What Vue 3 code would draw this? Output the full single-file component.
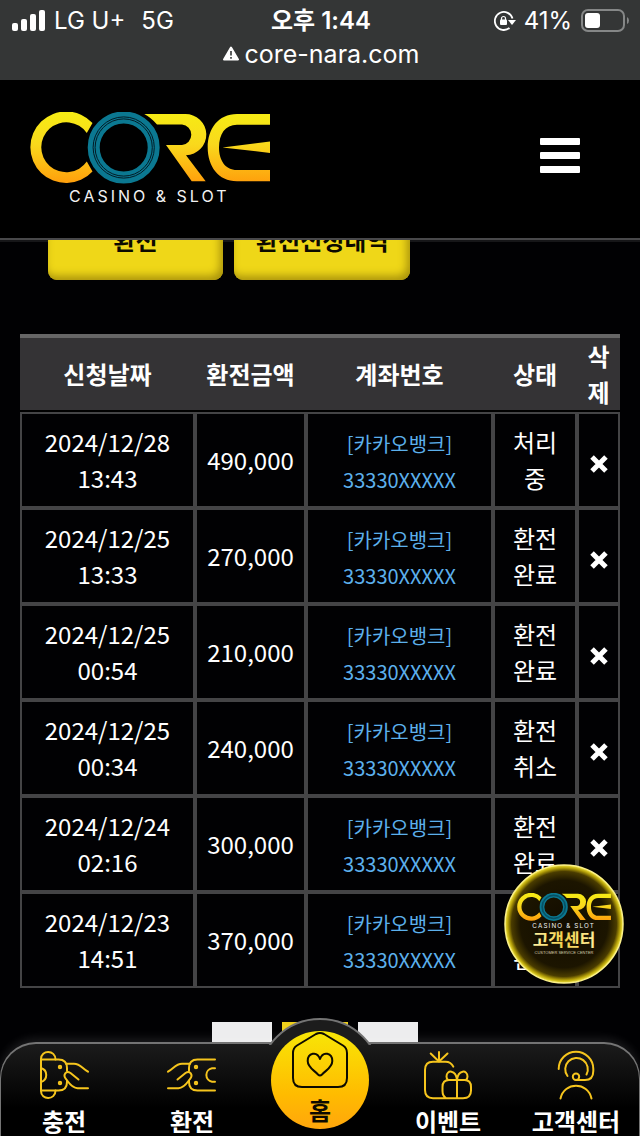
<script setup>
const rows = [
  { date: '2024/12/28', time: '13:43', amount: '490,000', status: '처리중' },
  { date: '2024/12/25', time: '13:33', amount: '270,000', status: '환전완료' },
  { date: '2024/12/25', time: '00:54', amount: '210,000', status: '환전완료' },
  { date: '2024/12/25', time: '00:34', amount: '240,000', status: '환전취소' },
  { date: '2024/12/24', time: '02:16', amount: '300,000', status: '환전완료' },
  { date: '2024/12/23', time: '14:51', amount: '370,000', status: '환전완료' },
]
</script>

<template>
  <div class="shell">
    <svg class="defs" aria-hidden="true">
      <defs>
        <linearGradient id="gold" gradientUnits="userSpaceOnUse" x1="0" y1="0" x2="0" y2="71">
          <stop offset="0" stop-color="#f6ec14" />
          <stop offset="0.45" stop-color="#f9d91c" />
          <stop offset="1" stop-color="#ff9f0c" />
        </linearGradient>
        <symbol id="core-logo" viewBox="0 0 240 92">
          <g fill="url(#gold)">
            <path d="M62.5 11A35.8 35.8 0 1 0 62.5 59.5L56.8 49.5A25 25 0 1 1 56.8 21Z" />
            <path d="M114.3 2H155A20.8 20.6 0 0 1 156 43.2L175.7 69.3H161.7L136 33H152A10.3 10.3 0 0 0 152 12.5H127Q121 5.5 114.3 2Z" />
            <path d="M240 2H207C188 2 177.7 17 177.7 35.5C177.7 54 188 69.3 207 69.3H240V58H207C195 58 189 48 189 35.5C189 22 195 12.7 207 12.7H240Z" />
            <path d="M192.5 35.4L240 29.6V41Z" />
          </g>
          <circle cx="93.7" cy="35.5" r="30" fill="none" stroke="#0b7891" stroke-width="12" />
          <circle cx="93.7" cy="35.5" r="30.6" fill="none" stroke="#021c26" stroke-width="1" />
          <circle cx="93.7" cy="35.5" r="28.6" fill="none" stroke="#021c26" stroke-width="1" />
          <text x="39" y="90" class="logo-text">CASINO &amp; SLOT</text>
        </symbol>
      </defs>
    </svg>

    <div class="status">
      <div class="status-row">
        <div class="carrier">
          <svg width="34" height="22" viewBox="0 0 34 22" fill="#fff" aria-hidden="true">
            <rect x="0" y="13" width="6" height="8" rx="2" />
            <rect x="9" y="9" width="6" height="12" rx="2" />
            <rect x="18" y="4" width="6" height="17" rx="2" />
            <rect x="27" y="0" width="6" height="21" rx="2" />
          </svg>
          <span>LG U+</span>
          <span class="network">5G</span>
        </div>
        <strong class="clock">오후 1:44</strong>
        <div class="power">
          <svg width="22" height="20" viewBox="0 0 22 20" aria-hidden="true">
            <path d="M18.5 7.5A9 9 0 1 0 15.5 17" fill="none" stroke="#fff" stroke-width="1.8" />
            <path d="M14 9H22L18 14Z" fill="#fff" />
            <rect x="6" y="8.5" width="7" height="5.5" rx="1" fill="#fff" />
            <path d="M7.5 9V7.5a2 2 0 0 1 4 0V9" fill="none" stroke="#fff" stroke-width="1.2" />
          </svg>
          <span>41%</span>
          <svg width="50" height="24" viewBox="0 0 50 24" aria-hidden="true">
            <rect x="2" y="1" width="42" height="21" rx="6" fill="none" stroke="#858787" stroke-width="2" />
            <rect x="5" y="4" width="15" height="15" rx="3" fill="#fff" />
            <path d="M47 8Q49 9 49 11.5T47 15Z" fill="#858787" />
          </svg>
        </div>
      </div>
      <div class="address">
        <svg width="16" height="16" viewBox="0 0 16 16" aria-hidden="true">
          <path d="M8 1.5L15 13.5H1Z" fill="#fff" stroke="#fff" stroke-width="2" stroke-linejoin="round" />
          <path d="M8 5V9.5M8 11V12.8" stroke="#343636" stroke-width="1.6" />
        </svg>
        <span>core-nara.com</span>
      </div>
    </div>

    <header class="header">
      <a href="#" aria-label="CORE Casino &amp; Slot">
        <svg class="logo" width="240" height="92"><use href="#core-logo" /></svg>
      </a>
      <button class="menu" type="button" aria-label="메뉴"><i></i><i></i><i></i></button>
    </header>

    <main class="content">
      <div class="tabs">
        <button type="button">환전</button>
        <button type="button">환전신청내역</button>
      </div>

      <table class="history">
        <colgroup>
          <col class="c-date" /><col class="c-amount" /><col /><col class="c-status" /><col class="c-delete" />
        </colgroup>
        <thead>
          <tr>
            <th>신청날짜</th>
            <th>환전금액</th>
            <th>계좌번호</th>
            <th>상태</th>
            <th class="narrow">삭제</th>
          </tr>
        </thead>
        <tbody>
          <tr v-for="row in rows" :key="row.date + row.time">
            <td>{{ row.date }} {{ row.time }}</td>
            <td>{{ row.amount }}</td>
            <td><span class="account">[카카오뱅크]<br />33330XXXXX</span></td>
            <td class="state">{{ row.status }}</td>
            <td class="remove">
              <button type="button" aria-label="삭제">
                <svg width="18" height="18" viewBox="0 0 18 18" aria-hidden="true">
                  <path d="M3.8 3.8L14.2 14.2M14.2 3.8L3.8 14.2" stroke="#fff" stroke-width="5" stroke-linecap="square" />
                </svg>
              </button>
            </td>
          </tr>
        </tbody>
      </table>

      <div class="pages">
        <button type="button" aria-label="이전"></button>
        <button type="button" class="current" aria-label="현재 페이지"></button>
        <button type="button" aria-label="다음"></button>
      </div>
    </main>

    <button class="support" type="button">
      <svg width="120" height="120" viewBox="0 0 120 120">
        <defs>
          <radialGradient id="disc">
            <stop offset="0" stop-color="#120c00" />
            <stop offset="0.74" stop-color="#1c1500" />
            <stop offset="0.89" stop-color="#4a3c00" />
            <stop offset="0.95" stop-color="#b39e08" />
            <stop offset="1" stop-color="#f5e83c" />
          </radialGradient>
          <linearGradient id="label" x1="0" y1="0" x2="1" y2="0">
            <stop offset="0" stop-color="#fff3a0" />
            <stop offset="0.5" stop-color="#f3cf4a" />
            <stop offset="1" stop-color="#fff0a0" />
          </linearGradient>
        </defs>
        <circle cx="60" cy="60" r="59" fill="url(#disc)" stroke="#fbf08a" stroke-width="1.5" />
        <use href="#core-logo" x="13" y="29" width="94" height="36" />
        <text x="60" y="82" class="support-title" fill="url(#label)">고객센터</text>
        <text x="60" y="90" class="support-sub">CUSTOMER SERVICE CENTER</text>
      </svg>
    </button>

    <nav class="dock">
      <span class="bump"><i></i></span>
      <a href="#">
        <svg width="48" height="48" viewBox="0 0 48 48" class="line" aria-hidden="true">
          <path d="M15.5 8.5C15.5-1.5 1-1.5 1 8V40C1 49.5 15.5 49.5 15.5 39.5" />
          <path d="M1 8.5H18.5Q27 8.5 27 17V20M1 39.5H18.5Q27 39.5 27 31V29.5M1 17A7.3 7.3 0 0 1 1 31" />
          <path d="M26 12.7H34C40 12.7 42 17 48 20.7M38.5 28.5L30.5 22C26 19 22.5 24 26 28C29 32 32 37.2 37.5 37.2H48" />
          <circle cx="20" cy="16" r="1.2" /><circle cx="20" cy="32" r="1.2" />
        </svg>
        <span>충전</span>
      </a>
      <a href="#">
        <svg width="48" height="48" viewBox="0 0 48 48" class="line" aria-hidden="true">
          <g transform="matrix(-1 0 0 1 48 0)">
            <path d="M1 8.5H18.5Q27 8.5 27 17V20M1 39.5H18.5Q27 39.5 27 31V29.5M1 17.3H4A6.8 6.8 0 0 1 4 30.7H1" />
            <path d="M26 12.7H34C40 12.7 42 17 48 20.7M38.5 28.5L30.5 22C26 19 22.5 24 26 28C29 32 32 37.2 37.5 37.2H48" />
            <circle cx="20" cy="16" r="1.2" /><circle cx="20" cy="32" r="1.2" />
          </g>
        </svg>
        <span>환전</span>
      </a>
      <a href="#" class="home">
        <svg width="56" height="56" viewBox="0 0 56 56" class="line dark" aria-hidden="true">
          <path d="M24 2L5 13.5Q1 16 1 21V46Q1 55 10 55H46Q55 55 55 46V21Q55 16 51 13.5L32 2Q28-.2 24 2Z" />
          <path d="M28 27C25 18.5 15.7 21 15.7 29C15.7 35.5 22 38 26 42.5Q28 44.5 30 42.5C34 38 40.3 35.5 40.3 29C40.3 21 31 18.5 28 27Z" />
        </svg>
        <span>홈</span>
      </a>
      <a href="#">
        <svg width="48" height="48" viewBox="0 0 48 48" class="line" aria-hidden="true">
          <path d="M29.3 15.7Q27 10.7 21.5 10.7H9Q1 10.7 1 19V39Q1 47.2 9 47.2H39Q47 47.2 47 39.5V36Q47 29 40.5 29H25Q18.5 29 18.5 36V40Q18.5 45 22 47M33 29V47" />
          <path d="M33 29C32 18.5 22.5 18.5 22.5 25.5Q22.5 27.5 24 29M33 29C34 18.5 43.5 18.5 43.5 25.5Q43.5 27.5 42 29M15 10.5V1M15 10.5L6.7 2.5M15 10.5L23.5 2.5" />
        </svg>
        <span>이벤트</span>
      </a>
      <a href="#">
        <svg width="48" height="48" viewBox="0 0 48 48" class="line" aria-hidden="true">
          <path d="M6.7 18A17.3 17.3 0 0 1 41.3 18V20Q41.3 29 33 29H24.5" />
          <path d="M15.5 25A11.3 11.3 0 1 1 34.5 23.5M8.5 47.5C12 30.5 36 30.5 39.5 47.5" />
          <circle cx="24" cy="25.8" r="3.2" />
        </svg>
        <span>고객센터</span>
      </a>
    </nav>
  </div>
</template>

<style>
body {
  margin: 0;
  background: #000;
}
</style>

<style scoped>
.shell {
  position: relative;
  display: flex;
  flex-direction: column;
  height: 100vh;
  overflow: hidden;
  background: #010103;
  color: #fff;
  font-family: "Noto Sans CJK KR", "Noto Sans", sans-serif;
  font-size: 24px;
  line-height: 36px;
}
.defs {
  position: absolute;
  width: 0;
  height: 0;
}
button {
  margin: 0;
  padding: 0;
  border: 0;
  background: none;
  color: inherit;
  font: inherit;
}
a {
  color: inherit;
  text-decoration: none;
}
svg {
  display: block;
}
.logo-text {
  fill: #f2f2f2;
  font-family: Inter, sans-serif;
  font-size: 16px;
  letter-spacing: 3px;
}

.status {
  padding: 5px 10px 9px 12px;
  background: #343636;
  font-family: Inter, "Noto Sans CJK KR", sans-serif;
}
.status-row {
  display: grid;
  grid-template-columns: 1fr auto 1fr;
  align-items: center;
  line-height: 32px;
}
.carrier,
.power,
.address {
  display: flex;
  align-items: center;
}
.carrier {
  gap: 8px;
}
.network {
  margin-left: 8px;
}
.clock {
  font-weight: 600;
}
.power {
  justify-content: flex-end;
  gap: 8px;
}
.address {
  justify-content: center;
  gap: 6px;
  font-size: 25px;
  line-height: 34px;
}

.header {
  display: flex;
  align-items: flex-start;
  justify-content: space-between;
  height: 126px;
  padding: 32px 60px 0 30px;
  border-bottom: 2px solid #48484a;
  background: #000;
  box-shadow: 0 2px 0 #161618;
}
.menu {
  display: grid;
  gap: 7px;
  width: 40px;
  margin-top: 26px;
}
.menu i {
  height: 7px;
  border-radius: 1px;
  background: #fff;
}

.content {
  position: relative;
  flex: 1;
  min-height: 0;
  padding: 0 20px;
  overflow: hidden;
}
.tabs {
  display: flex;
  gap: 11px;
  margin: -38px 28px 54px;
}
.tabs button {
  min-width: 175px;
  height: 78px;
  padding: 0 22px 2px;
  border-radius: 9px;
  background: #efd718;
  box-shadow: inset -3px -4px 8px #a8920c;
  color: #0c0a00;
  font-weight: 700;
}

.history {
  width: 100%;
  table-layout: fixed;
  border-collapse: separate;
  border-spacing: 0;
  text-align: center;
}
.c-date { width: 175px; }
.c-amount { width: 111px; }
.c-status { width: 84px; }
.c-delete { width: 43px; }
th {
  padding: 0;
  border-top: 4px solid #666;
  border-bottom: 2px solid #000;
  background: #343335;
  font-weight: 700;
}
.narrow {
  padding: 0 8px;
  word-break: break-all;
}
td {
  padding: 10px 8px;
  border: 2px solid #444446;
}
.account {
  color: #5cb0ec;
  font-size: 20px;
  line-height: 32px;
}
.state {
  padding: 10px 16px;
}
.remove {
  padding: 10px 0 4px;
}
.remove svg {
  margin: auto;
}
.remove button {
  width: 100%;
}

.pages {
  display: flex;
  justify-content: center;
  margin-top: 34px;
}
.pages button {
  width: 60px;
  height: 60px;
  margin-right: 10px;
  background: #ededee;
}
.pages .current {
  width: 66px;
  background: #efd01c;
}

.support {
  position: absolute;
  right: 16px;
  bottom: 152px;
  z-index: 2;
  border-radius: 50%;
}
.support-title {
  font-family: "Noto Sans CJK KR", sans-serif;
  font-size: 17px;
  font-weight: 700;
  text-anchor: middle;
}
.support-sub {
  fill: #d8cfae;
  font-family: "Liberation Sans", sans-serif;
  font-size: 4px;
  text-anchor: middle;
}

.dock {
  position: absolute;
  right: 0;
  bottom: 0;
  left: 0;
  z-index: 1;
  display: grid;
  grid-template-columns: repeat(5, 1fr);
  height: 94px;
  border-radius: 36px 36px 0 0;
  background: linear-gradient(#1c1c1c, #000 70%);
  box-shadow: inset 0 1px 0 1px #747474, 0 -4px 10px rgba(255, 255, 255, 0.1);
  font-weight: 700;
}
.dock a {
  position: relative;
  display: flex;
  flex-direction: column;
  align-items: center;
  padding-top: 9px;
  line-height: 44px;
  white-space: nowrap;
}
.bump {
  position: absolute;
  top: -24px;
  left: 50%;
  width: 124px;
  height: 27px;
  margin-left: -62px;
  overflow: hidden;
}
.bump i {
  display: block;
  box-sizing: border-box;
  height: 124px;
  border: 2px solid #747474;
  border-radius: 50%;
  background: #1c1c1c;
}
.line {
  flex: none;
  fill: none;
  stroke: #f6c51d;
  stroke-width: 2;
  stroke-linecap: round;
  stroke-linejoin: round;
  overflow: visible;
}
.dark {
  stroke: #0d0a00;
}
.dock .home {
  justify-self: center;
  box-sizing: border-box;
  width: 98px;
  height: 98px;
  margin-top: -11px;
  padding-top: 1px;
  border-radius: 50%;
  background: linear-gradient(#f8e606, #fb0 65%, #ffa60c);
  color: #0d0a00;
}
</style>
